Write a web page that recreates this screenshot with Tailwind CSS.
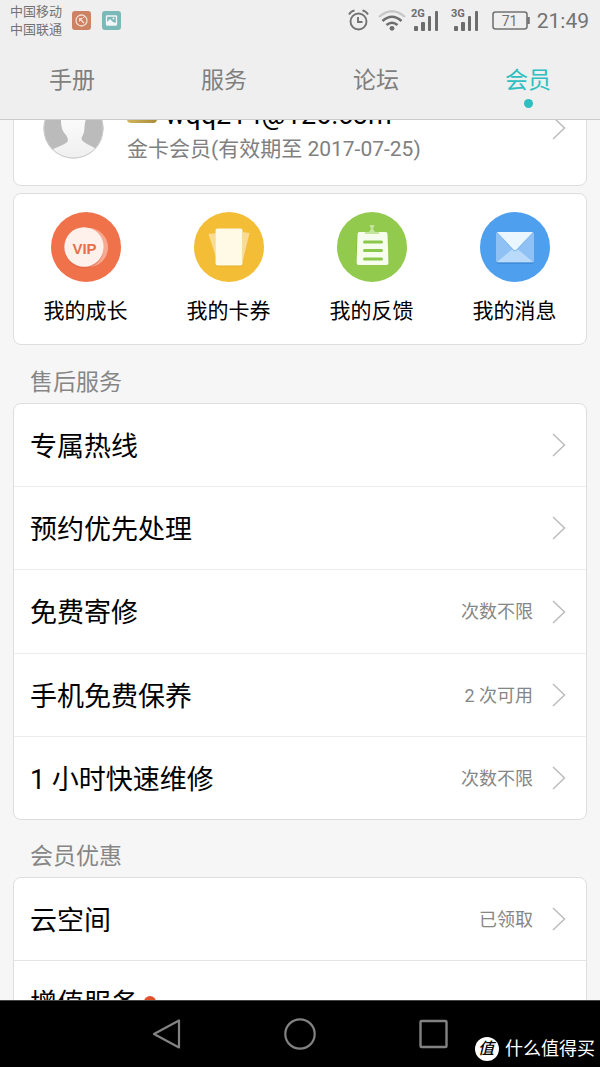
<!DOCTYPE html>
<html lang="zh-CN">
<head>
<meta charset="utf-8">
<meta name="viewport" content="width=device-width, initial-scale=1">
<title>会员</title>
<script src="https://cdn.jsdelivr.net/npm/@tailwindcss/browser@4"></script>
</head>
<body class="flex h-screen flex-col overflow-hidden bg-[#f6f6f6] font-['Roboto','Noto_Sans_CJK_SC',sans-serif] text-black">

<svg class="hidden" aria-hidden="true">
  <symbol id="chevron" viewBox="0 0 14 26"><path d="M1 2 12.500 13 1 24" fill="none" stroke="#bcbcbc" stroke-width="1.500"/></symbol>
</svg>

<header class="shrink-0 border-b border-[#cbcbcb] bg-[#efefef]">
  <!-- Status bar -->
  <div class="flex h-10 items-center justify-between pr-[11px] pl-[10px] text-[#737373]">
    <div class="flex items-center">
      <div class="pt-[2px] text-[13px] leading-[18px]"><p>中国移动</p><p>中国联通</p></div>
      <svg class="ml-[10px] size-[19px]" viewBox="0 0 19 19" fill="none"><rect width="19" height="19" rx="3" fill="#cc8263"/><circle cx="9.500" cy="9.500" r="5.500" stroke="#f3ded3" stroke-width="1.300"/><path d="M7 7h4L9.500 8.500l3 3-1 1-3-3L7 11z" fill="#f3ded3"/><path d="m11 7 2-2" stroke="#f3ded3"/></svg>
      <svg class="ml-[11px] size-[19px]" viewBox="0 0 19 19" fill="none"><rect width="19" height="19" rx="3" fill="#79bab9"/><rect x="4.500" y="5" width="10" height="9" rx=".5" stroke="#f0f8f8" stroke-width="1.300"/><path d="m5 11 3-3 3 3 3 1v2H5z" fill="#f0f8f8"/><circle cx="11.500" cy="7.500" r="1" fill="#f0f8f8"/></svg>
    </div>
    <div class="flex items-center">
      <svg class="h-[22px] w-[21px]" viewBox="0 0 21 22" fill="none" stroke="#737373" stroke-width="1.900"><circle cx="10.500" cy="12.500" r="8"/><path d="M10 8v5h4.500M1 5.500Q3 2 6.500 1.500M14.500 1.500Q18 2 20 5.500"/></svg>
      <svg class="ml-[9px] h-[22px] w-7" viewBox="0 0 28 22" fill="none" stroke="#6d6d6d" stroke-width="2.600"><path d="M1 8Q14-3.500 27 8" stroke="#c6c6c6" stroke-width="2.200"/><path d="M4.500 12Q14 3.500 23.500 12M8.500 16q5.500-4.500 11 0"/><circle cx="14" cy="19.300" r="2.400" fill="#6d6d6d" stroke="none"/></svg>
      <svg class="ml-[5px] h-6 w-7" viewBox="0 0 28 24" fill="#6d6d6d"><text x="0" y="9" font-size="11" font-weight="700" font-family="Roboto, sans-serif">2G</text><rect x="3" y="18" width="4" height="5" rx="1"/><rect x="10" y="14" width="4" height="9" rx="1"/><rect x="17" y="8" width="3" height="15" rx="1"/><rect x="24" y="3" width="3" height="20" rx="1"/></svg>
      <svg class="ml-3 h-6 w-7" viewBox="0 0 28 24" fill="#6d6d6d"><text x="0" y="9" font-size="11" font-weight="700" font-family="Roboto, sans-serif">3G</text><rect x="3" y="18" width="4" height="5" rx="1"/><rect x="10" y="14" width="4" height="9" rx="1"/><rect x="17" y="8" width="3" height="15" rx="1"/><rect x="24" y="3" width="3" height="20" rx="1"/></svg>
      <svg class="ml-[13px] h-[19px] w-[38px]" viewBox="0 0 38 19" fill="none"><rect x="1" y="1" width="34" height="17" rx="2.500" stroke="#737373" stroke-width="1.600"/><path d="M36.500 6v7" stroke="#737373" stroke-width="2.500"/><text x="17.500" y="14.500" text-anchor="middle" font-size="14" fill="#737373" font-family="Roboto, sans-serif">71</text></svg>
      <time class="ml-[7px] pt-px text-[21px] leading-6">21:49</time>
    </div>
  </div>
  <!-- Tabs -->
  <nav class="-mx-1 grid h-[79px] grid-cols-4 text-center text-[23px] leading-8 text-[#7f7f7f]">
    <a href="#" class="pt-[25px]">手册</a>
    <a href="#" class="pt-[25px]">服务</a>
    <a href="#" class="pt-[25px]">论坛</a>
    <a href="#" aria-current="page" class="flex flex-col items-center gap-[2px] pt-[25px] text-[#2fbfc0]">会员<span class="size-[9px] rounded-full bg-[#2fbfc0]"></span></a>
  </nav>
</header>

<main class="min-h-0 flex-1 overflow-hidden px-[13px]">
  <!-- Profile, partly scrolled under the header -->
  <a href="#" class="-mt-10 flex h-[106px] items-center rounded-lg border border-[#dedede] bg-white pr-5 pl-[29px]">
    <svg class="mb-[10px] size-[61px] shrink-0" viewBox="0 0 61 61"><defs><clipPath id="face"><circle cx="30.500" cy="30.500" r="30"/></clipPath><linearGradient id="skin" x1="0" y1="0" x2="0" y2="1"><stop offset="0" stop-color="#fff"/><stop offset="1" stop-color="#efefef"/></linearGradient></defs><g clip-path="url(#face)"><rect width="61" height="61" fill="#bbb"/><path d="M30 6C20 6 17 13 18 22c0 8 2 12 5 15 2 3 3 6 0 8-5 3-9 4-13 6v10h43v-10c-4-3-8-4-12-7-3-2-3-4-1-7 2-4 1-8 2-12C45 12 40 6 30 6" fill="url(#skin)"/></g><circle cx="30.500" cy="30.500" r="29.500" fill="none" stroke="#ccc"/></svg>
    <span class="ml-[23px] min-w-0 flex-1">
      <span class="flex items-center gap-2 text-[27px] leading-7"><span class="h-4 w-[30px] rounded-sm bg-linear-to-r from-[#d2b45e] to-[#a98c35]"></span>wqq214@126.com</span>
      <span class="mt-1 block text-[21px] leading-8 text-[#808080]">金卡会员(有效期至 2017-07-25)</span>
    </span>
    <svg class="mb-[10px] h-[26px] w-[14px]"><use href="#chevron"/></svg>
  </a>

  <!-- Shortcuts -->
  <nav class="mt-[7px] grid grid-cols-4 rounded-lg border border-[#dedede] bg-white pt-[18px] pb-[17px] text-center text-[21px] leading-8">
    <a href="#" class="flex flex-col items-center gap-[13px]">
      <svg class="size-[70px]" viewBox="0 0 70 70"><circle cx="35" cy="35" r="35" fill="#f0724b"/><circle cx="37.500" cy="35.500" r="19.500" fill="#f7aa91"/><circle cx="33" cy="36.500" r="19.700" fill="#d85e3b" opacity=".5"/><circle cx="33" cy="35" r="19.700" fill="#fef1ec"/><text x="33.500" y="41.500" text-anchor="middle" font-size="15" font-weight="700" fill="#e6714b" font-family="Liberation Sans, sans-serif">VIP</text></svg>
      我的成长
    </a>
    <a href="#" class="flex flex-col items-center gap-[13px]">
      <svg class="size-[70px]" viewBox="0 0 70 70"><circle cx="35" cy="35" r="35" fill="#f3bd35"/><path d="m14.500 22 9-1v29zM55.500 21l-7-1v30z" fill="#f9dc91"/><rect x="21.500" y="17.500" width="27" height="37" rx="2" fill="#d9a320" opacity=".5"/><rect x="21.500" y="16.500" width="27" height="37" rx="2" fill="#fffae5"/></svg>
      我的卡券
    </a>
    <a href="#" class="flex flex-col items-center gap-[13px]">
      <svg class="size-[70px]" viewBox="0 0 70 70"><circle cx="35" cy="35" r="35" fill="#91ca4d"/><path d="m20 22-1 29q0 2 2 2h29l2-3-3-28z" fill="#6fae32" opacity=".65"/><path d="M22.500 20h26q2 0 2 2l1 29q0 2-2 2h-28q-2 0-2-2l1-29q0-2 2-2" fill="#f6fded"/><path d="M28 20h4l2-3-1.500-4h5L36 17l2 3h4v2H28z" fill="#c4e59d"/><path d="M27.500 30h17M27.500 38.500h17M27.500 47h17" stroke="#8bc84a" stroke-width="3" stroke-linecap="round"/></svg>
      我的反馈
    </a>
    <a href="#" class="flex flex-col items-center gap-[13px]">
      <svg class="size-[70px]" viewBox="0 0 70 70"><circle cx="35" cy="35" r="35" fill="#4f9fef"/><rect x="16.500" y="22" width="37" height="30" rx="2" fill="#3279c4" opacity=".5"/><rect x="16" y="20" width="38" height="30.500" rx="2" fill="#8fc1f5"/><path d="m17 50 18-15 18 15z" fill="#b9dafa"/><path d="M16.500 20h37L37.500 38q-2.500 2.500-5 0z" fill="#6dacea" opacity=".6"/><path d="M17 20h36L37 37q-2 2-4 0z" fill="#e9f6ff"/></svg>
      我的消息
    </a>
  </nav>

  <section>
    <h2 class="mt-[22px] mb-1 pl-[17px] text-[23px] leading-8 text-[#868686]">售后服务</h2>
    <ul class="divide-y divide-[#ececec] rounded-lg border border-[#dedede] bg-white">
      <li><a href="#" class="flex h-[82px] items-center pr-5 pl-4"><span class="flex-1 pt-1 text-[27px]">专属热线</span><svg class="h-[26px] w-[14px]"><use href="#chevron"/></svg></a></li>
      <li><a href="#" class="flex h-[82px] items-center pr-5 pl-4"><span class="flex-1 pt-1 text-[27px]">预约优先处理</span><svg class="h-[26px] w-[14px]"><use href="#chevron"/></svg></a></li>
      <li><a href="#" class="flex h-[83px] items-center pr-5 pl-4"><span class="flex-1 pt-1 text-[27px]">免费寄修</span><span class="mr-[19px] text-[18px] text-[#868686]">次数不限</span><svg class="h-[26px] w-[14px]"><use href="#chevron"/></svg></a></li>
      <li><a href="#" class="flex h-[82px] items-center pr-5 pl-4"><span class="flex-1 pt-1 text-[27px]">手机免费保养</span><span class="mr-[19px] text-[18px] text-[#868686]">2 次可用</span><svg class="h-[26px] w-[14px]"><use href="#chevron"/></svg></a></li>
      <li><a href="#" class="flex h-[82px] items-center pr-5 pl-4"><span class="flex-1 pt-1 text-[27px]">1 小时快速维修</span><span class="mr-[19px] text-[18px] text-[#868686]">次数不限</span><svg class="h-[26px] w-[14px]"><use href="#chevron"/></svg></a></li>
    </ul>
  </section>

  <section>
    <h2 class="mt-[21px] mb-1 pl-[17px] text-[23px] leading-8 text-[#868686]">会员优惠</h2>
    <ul class="divide-y divide-[#e4e4e4] rounded-lg border border-[#dedede] bg-white">
      <li><a href="#" class="flex h-[82px] items-center pr-5 pl-4"><span class="flex-1 pt-1 text-[27px]">云空间</span><span class="mr-[19px] text-[18px] text-[#868686]">已领取</span><svg class="h-[26px] w-[14px]"><use href="#chevron"/></svg></a></li>
      <li><a href="#" class="flex h-[82px] items-center gap-[6px] pl-4"><span class="pt-1 text-[27px]">增值服务</span><span class="size-3 rounded-full bg-[#e2502c]"></span></a></li>
    </ul>
  </section>
</main>

<!-- System navigation -->
<footer class="relative h-[67px] shrink-0 border-t border-[#444] bg-black">
  <div class="flex h-full items-center justify-center gap-[100px]">
    <button type="button" aria-label="返回"><svg class="h-8 w-[34px]" viewBox="0 0 34 32"><path d="M30 2.500v27L5 16z" fill="none" stroke="#828282" stroke-width="2.200" stroke-linejoin="round"/></svg></button>
    <button type="button" aria-label="主页"><svg class="h-8 w-[34px]" viewBox="0 0 34 32"><circle cx="17" cy="16" r="14.700" fill="none" stroke="#828282" stroke-width="2.200"/></svg></button>
    <button type="button" aria-label="最近任务"><svg class="h-8 w-[34px]" viewBox="0 0 34 32"><rect x="3.500" y="3" width="26" height="26" rx="1" fill="none" stroke="#828282" stroke-width="2.400"/></svg></button>
  </div>
  <p class="absolute right-[5px] bottom-[6px] flex items-center gap-[6px] text-[18px] leading-6 text-white"><span class="flex size-6 items-center justify-center rounded-full bg-white pr-[2px] text-[16px] font-medium text-black italic">值</span>什么值得买</p>
</footer>
</body>
</html>
